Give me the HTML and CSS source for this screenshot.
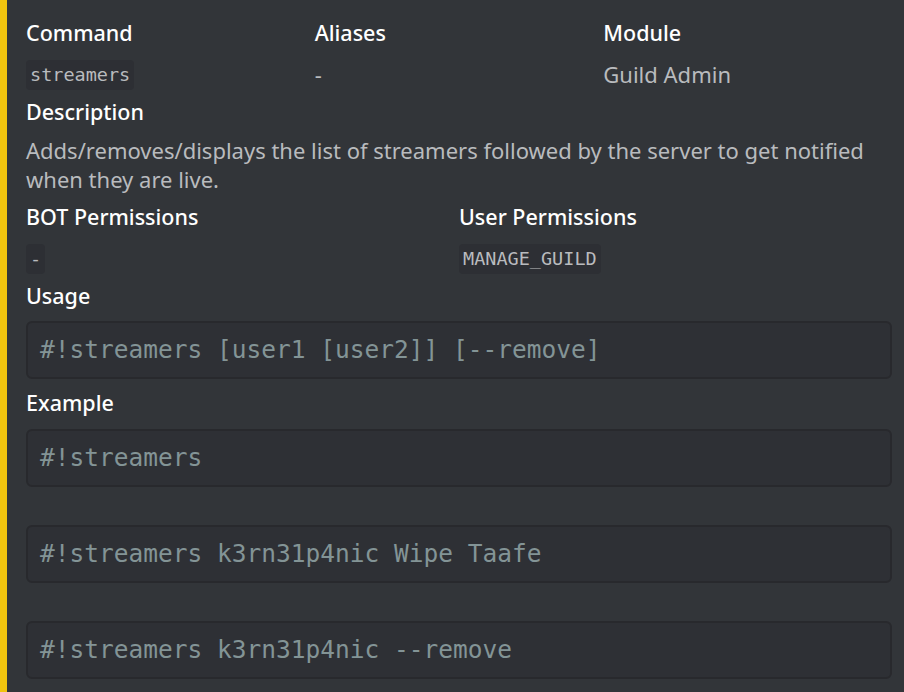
FILE: index.html
```html
<!DOCTYPE html>
<html>
<head>
<meta charset="utf-8">
<link rel="stylesheet" href="styles.css">
</head>
<body>
<div class="embed">
  <div class="row three">
    <div class="field">
      <div class="name">Command</div>
      <div class="value"><span class="chip">streamers</span></div>
    </div>
    <div class="field">
      <div class="name">Aliases</div>
      <div class="value text">-</div>
    </div>
    <div class="field">
      <div class="name">Module</div>
      <div class="value text">Guild Admin</div>
    </div>
  </div>
  <div class="field block">
    <div class="name">Description</div>
    <div class="desc">Adds/removes/displays the list of streamers followed by the server to get notified when they are live.</div>
  </div>
  <div class="row two">
    <div class="field">
      <div class="name">BOT Permissions</div>
      <div class="value"><span class="chip">-</span></div>
    </div>
    <div class="field">
      <div class="name">User Permissions</div>
      <div class="value"><span class="chip">MANAGE_GUILD</span></div>
    </div>
  </div>
  <div class="field block">
    <div class="name">Usage</div>
    <pre class="code">#!streamers [user1 [user2]] [--remove]</pre>
  </div>
  <div class="field block examples">
    <div class="name">Example</div>
    <pre class="code">#!streamers</pre>
    <pre class="code spaced">#!streamers k3rn31p4nic Wipe Taafe</pre>
    <pre class="code spaced">#!streamers k3rn31p4nic --remove</pre>
  </div>
</div>
</body>
</html>
```
FILE: styles.css
```css
html, body {
  margin: 0;
  padding: 0;
  background: #323539;
  height: 100%;
  overflow: hidden;
}
.embed {
  box-sizing: border-box;
  width: 904px;
  min-height: 692px;
  border-left: 7px solid #f1c40f;
  background: #323539;
  padding: 19px 12px 0 19px;
  font-family: "Noto Sans", "Open Sans", sans-serif;
  display: flex;
  flex-direction: column;
}
.row {
  display: grid;
}
.row.three { grid-template-columns: repeat(3, 1fr); }
.row.two { grid-template-columns: repeat(2, 1fr); }
.field {
  display: flex;
  flex-direction: column;
}
.name {
  color: #ffffff;
  font-size: 21.5px;
  font-weight: 500;
  line-height: 28px;
}
.value {
  margin-top: 13px;
  height: 30px;
  display: flex;
  align-items: center;
}
.value.text {
  margin-top: 12px;
  color: #b9bbbe;
  font-size: 22px;
  line-height: 30px;
}
.chip {
  font-family: "DejaVu Sans Mono", monospace;
  font-size: 18.5px;
  line-height: 30px;
  color: #b9bbbe;
  background: #2d2f34;
  border-radius: 4px;
  padding: 0 4px;
}
.block { margin-top: 8px; }
.block.examples { margin-top: 10px; }
.row.two { margin-top: 9px; }
.desc {
  margin-top: 10px;
  color: #b9bbbe;
  font-size: 22px;
  line-height: 29px;
}
.code {
  margin: 11px 0 0 0;
  box-sizing: border-box;
  height: 58px;
  border: 2px solid #28292d;
  border-radius: 6px;
  background: #2e3035;
  padding: 12px 12px;
  font-family: "DejaVu Sans Mono", monospace;
  font-size: 24.5px;
  line-height: 30px;
  color: #839496;
  white-space: pre;
}
.examples .code { margin-top: 12px; }
.examples .code.spaced { margin-top: 38px; }
```
